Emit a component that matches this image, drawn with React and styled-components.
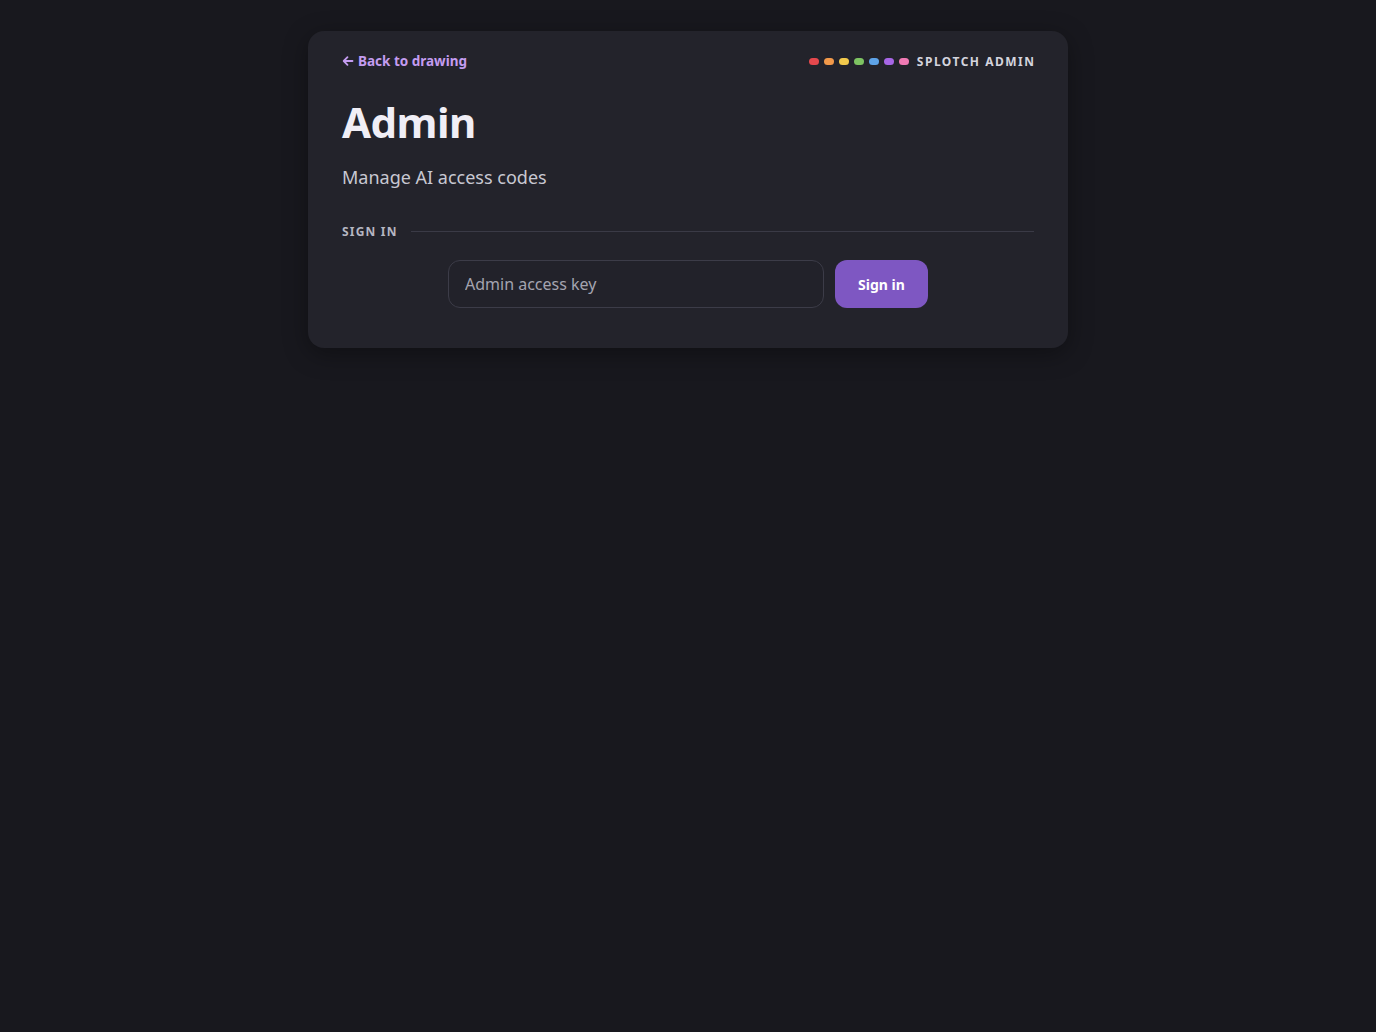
import React from "react";
import styled, { createGlobalStyle } from "styled-components";

const GlobalStyle = createGlobalStyle`
  html, body {
    margin: 0;
    padding: 0;
    background: #18181e;
  }
  body {
    font-family: "Noto Sans", "Open Sans", sans-serif;
    color: #ececf2;
    min-height: 100vh;
  }
  * {
    box-sizing: border-box;
  }
`;

const Page = styled.div`
  padding: 31px 16px 40px;
  display: flex;
  justify-content: center;
`;

const Card = styled.main`
  width: 760px;
  background: #23232b;
  border-radius: 16px;
  padding: 21px 34px 40px;
  box-shadow: 0 6px 24px rgba(0, 0, 0, 0.35);
`;

const TopBar = styled.div`
  display: flex;
  align-items: center;
  justify-content: space-between;
  height: 18px;
`;

const BackLink = styled.a`
  display: inline-flex;
  align-items: center;
  gap: 4px;
  color: #c49cf0;
  font-size: 13.5px;
  font-weight: 700;
  text-decoration: none;
  cursor: pointer;
`;

const Brand = styled.div`
  display: flex;
  align-items: center;
  gap: 8px;
`;

const Dots = styled.div`
  display: flex;
  gap: 5px;
`;

const Dot = styled.span`
  width: 10px;
  height: 7px;
  border-radius: 4px;
  background: ${(p) => p.color};
`;

const BrandText = styled.span`
  font-size: 12px;
  font-weight: 700;
  letter-spacing: 1.5px;
  color: #d4d4de;
  margin-right: -1.5px;
`;

const Title = styled.h1`
  margin: 25px 0 0;
  font-size: 42px;
  line-height: 54px;
  font-weight: 700;
  color: #f0eef6;
  letter-spacing: -0.5px;
`;

const Subtitle = styled.p`
  margin: 16px 0 0;
  font-size: 18px;
  line-height: 24px;
  color: #c8c8d2;
`;

const Section = styled.section`
  margin-top: 34px;
`;

const SectionHead = styled.div`
  display: flex;
  align-items: center;
  gap: 13px;
`;

const SectionLabel = styled.span`
  font-size: 12px;
  font-weight: 700;
  letter-spacing: 1.2px;
  color: #b6b6c2;
`;

const Rule = styled.div`
  flex: 1;
  height: 1px;
  background: #3a3a46;
`;

const Form = styled.form`
  display: flex;
  gap: 11px;
  width: 480px;
  margin: 20px auto 0;
`;

const KeyInput = styled.input`
  flex: 1;
  height: 48px;
  border-radius: 12px;
  border: 1px solid #3c3c48;
  background: #22222a;
  color: #ececf2;
  padding: 0 16px;
  font-family: inherit;
  font-size: 16px;
  outline: none;

  &::placeholder {
    color: #a4a4b0;
  }
`;

const SubmitButton = styled.button`
  width: 93px;
  height: 48px;
  border: none;
  border-radius: 12px;
  background: #7e57c2;
  color: #ffffff;
  font-family: inherit;
  font-size: 14px;
  font-weight: 700;
  cursor: pointer;
`;

const dotColors = [
  "#e5484d",
  "#f2994a",
  "#f2c94c",
  "#7ec362",
  "#5ea3e8",
  "#a766e6",
  "#f07ab4",
];

const ArrowLeft = () => (
  <svg width="12" height="12" viewBox="0 0 12 12" fill="none">
    <path
      d="M10.5 6H2M5.5 2.2L1.7 6l3.8 3.8"
      stroke="currentColor"
      strokeWidth="1.8"
      strokeLinecap="round"
      strokeLinejoin="round"
    />
  </svg>
);

const App = () => {
  const onSubmit = (e) => {
    e.preventDefault();
  };

  return (
    <>
      <GlobalStyle />
      <Page>
        <Card>
          <TopBar>
            <BackLink>
              <ArrowLeft />
              Back to drawing
            </BackLink>
            <Brand>
              <Dots>
                {dotColors.map((c) => (
                  <Dot key={c} color={c} />
                ))}
              </Dots>
              <BrandText>SPLOTCH ADMIN</BrandText>
            </Brand>
          </TopBar>

          <Title>Admin</Title>
          <Subtitle>Manage AI access codes</Subtitle>

          <Section>
            <SectionHead>
              <SectionLabel>SIGN IN</SectionLabel>
              <Rule />
            </SectionHead>
            <Form onSubmit={onSubmit}>
              <KeyInput type="password" placeholder="Admin access key" />
              <SubmitButton type="submit">Sign in</SubmitButton>
            </Form>
          </Section>
        </Card>
      </Page>
    </>
  );
};

export default App;
